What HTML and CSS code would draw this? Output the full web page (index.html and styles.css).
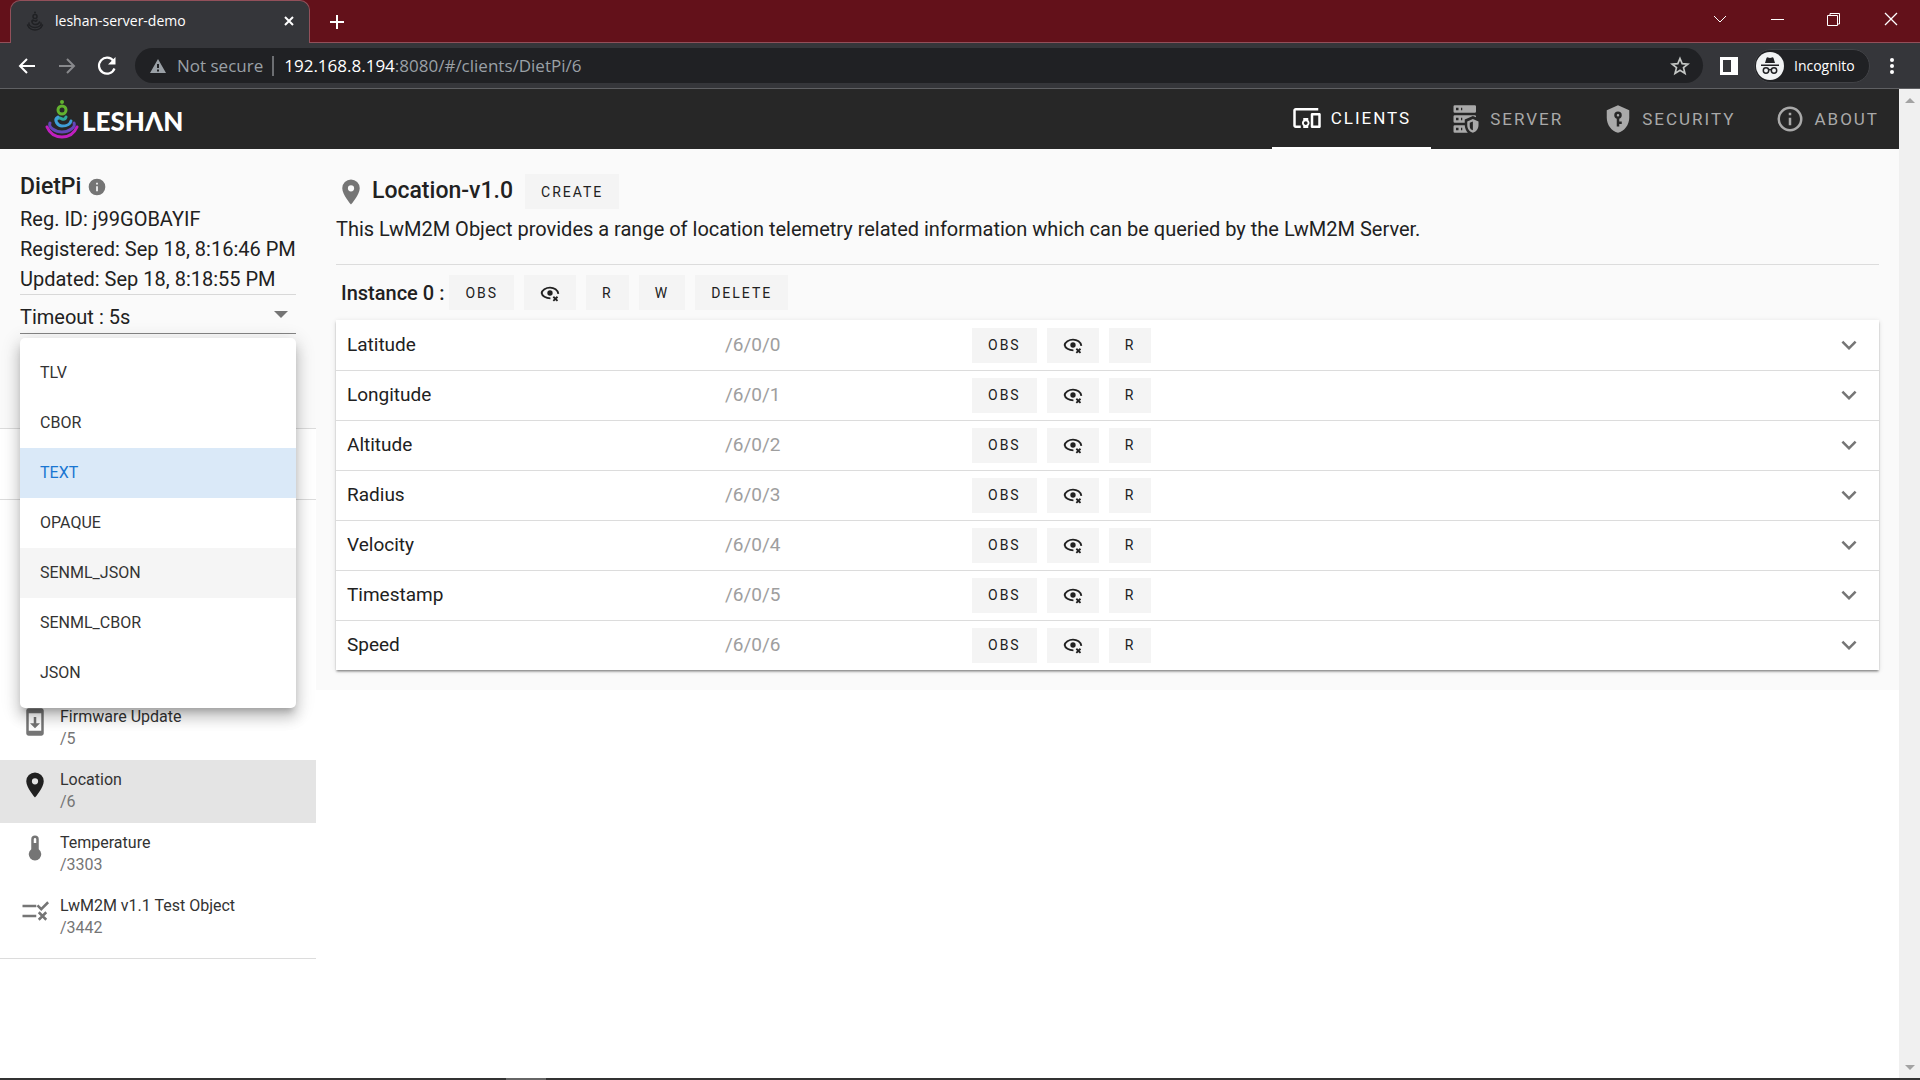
FILE: index.html
```html
<!DOCTYPE html>
<html lang="en">
<head>
<meta charset="utf-8">
<title>leshan-server-demo</title>
<link rel="stylesheet" href="styles.css">
</head>
<body>
<svg class="defs" aria-hidden="true">
  <symbol id="i-pin" viewBox="0 0 24 24"><path d="M12,11.5A2.5,2.5 0 0,1 9.5,9A2.5,2.5 0 0,1 12,6.5A2.5,2.5 0 0,1 14.5,9A2.5,2.5 0 0,1 12,11.5M12,2A7,7 0 0,0 5,9C5,14.25 12,22 12,22C12,22 19,14.25 19,9A7,7 0 0,0 12,2Z"/></symbol>
  <symbol id="i-eye" viewBox="0 0 24 24"><circle cx="12" cy="12" r="3.2"/><path d="M22 13C21.5 8.500 17 5.500 12 5.500C7 5.500 2.500 8.500 2 12C2.500 15.500 7 18.500 12.500 18.500M16 16.500L21 21.500M21 16.500L16 21.500" fill="none" stroke="currentColor" stroke-width="2.200"/></symbol>
  <symbol id="i-down" viewBox="0 0 24 24"><path d="M7.410,8.580L12,13.170L16.590,8.580L18,10L12,16L6,10L7.410,8.580Z"/></symbol>
  <symbol id="i-monk" viewBox="0 0 34 40"><g fill="none" stroke-width="3" stroke-linecap="round"><circle class="m1" cx="17" cy="11" r="4"/><path class="m2" d="M12 20Q14 18 17 20Q20 21 21 18"/><path class="m3" d="M13 18C8 21 13 27 17 27C21 27 25 26 26 22"/><path class="m4" d="M5 24C3 28 10 33 17 33C24 33 31 28 29 24"/><path class="m5" d="M2 28C5 35 10 38 17 38C24 38 29 35 32 28"/></g><circle class="m0" cx="17" cy="3" r="2"/></symbol>
</svg>

<header class="browser">
  <div class="tabstrip">
    <div class="tab">
      <svg class="favicon" viewBox="0 0 34 40"><use href="#i-monk"/></svg>
      <span class="tab-title">leshan-server-demo</span>
      <button class="plain" aria-label="Close tab"><svg class="s10" viewBox="0 0 10 10"><path d="M1 1L9 9M9 1L1 9" fill="none" stroke="currentColor" stroke-width="2"/></svg></button>
    </div>
    <button class="plain new-tab" aria-label="New tab"><svg class="s16" viewBox="0 0 16 16"><path d="M8 1V15M1 8H15" fill="none" stroke="currentColor" stroke-width="2"/></svg></button>
    <div class="window-controls">
      <button class="plain" aria-label="Tab search"><svg class="s14" viewBox="0 0 14 14"><path d="M1 4L7 10L13 4" fill="none" stroke="currentColor"/></svg></button>
      <button class="plain" aria-label="Minimize"><svg class="s14" viewBox="0 0 14 14"><path d="M1 7.500H14" fill="none" stroke="currentColor"/></svg></button>
      <button class="plain" aria-label="Restore"><svg class="s14" viewBox="0 0 14 14"><path d="M.5 3.500H10.500V13.500H.5ZM3 3V1.500H12.500V12H11" fill="none" stroke="currentColor"/></svg></button>
      <button class="plain" aria-label="Close"><svg class="s14" viewBox="0 0 14 14"><path d="M1 1L13 13M13 1L1 13" fill="none" stroke="currentColor" stroke-width="1.300"/></svg></button>
    </div>
  </div>
  <div class="toolbar">
    <div class="history">
      <button class="plain" aria-label="Back"><svg class="s20" viewBox="0 0 20 20"><path d="M18 10H3M10 3L3 10L10 17" fill="none" stroke="currentColor" stroke-width="2"/></svg></button>
      <button class="plain faded" aria-label="Forward"><svg class="s20" viewBox="0 0 20 20"><path d="M2 10H17M10 3L17 10L10 17" fill="none" stroke="currentColor" stroke-width="2"/></svg></button>
      <button class="plain" aria-label="Reload"><svg class="s20" viewBox="0 0 20 20"><path d="M16.500 5A8 8 0 1 0 17.500 12.500" fill="none" stroke="currentColor" stroke-width="2.200"/><path d="M18.500 1V8.500H11Z"/></svg></button>
    </div>
    <div class="omnibox">
      <svg class="s16 warn" viewBox="0 0 16 16"><path fill-rule="evenodd" d="M8 1L16 15H0ZM7 6V10H9V6ZM7 11.500V13.500H9V11.500Z"/></svg>
      <span class="insecure">Not secure</span>
      <span class="url"><b>192.168.8.194</b>:8080/#/clients/DietPi/6</span>
      <button class="plain star" aria-label="Bookmark"><svg class="s20" viewBox="0 0 24 24"><path d="M12 3L14.600 9.200L21.500 9.700L16.200 14L18 21L12 17.200L6 21L7.800 14L2.500 9.700L9.400 9.200Z" fill="none" stroke="currentColor" stroke-width="2"/></svg></button>
    </div>
    <button class="plain panel" aria-label="Side panel"><svg class="s18" viewBox="0 0 18 18"><path fill-rule="evenodd" d="M0 0H18V18H0ZM3 3V15H11V3Z"/></svg></button>
    <div class="incognito">
      <svg class="s28" viewBox="0 0 28 28"><circle cx="14" cy="14" r="14" fill="#f1f3f4"/><g fill="#202124"><path d="M9 11L10.500 6Q11 5 12 5.500L14 6L16 5.500Q17 5 17.500 6L19 11ZM5 12.500H23V14H5Z"/><g fill="none" stroke="#202124" stroke-width="1.500"><circle cx="10" cy="18.500" r="2.700"/><circle cx="18" cy="18.500" r="2.700"/><path d="M12.700 18Q14 17 15.300 18"/></g></g></svg>
      <span>Incognito</span>
    </div>
    <button class="plain dots" aria-label="Menu"><svg class="s18" viewBox="0 0 18 18"><circle cx="9" cy="3" r="2"/><circle cx="9" cy="9" r="2"/><circle cx="9" cy="15" r="2"/></svg></button>
  </div>
</header>

<div class="viewport">
  <div class="app">
    <header class="appbar">
      <a class="logo" href="#"><svg class="monk" viewBox="0 0 34 40"><use href="#i-monk"/></svg><span>LESHΛN</span></a>
      <nav class="nav">
        <a class="nav-link active" href="#clients"><svg class="s30" viewBox="0 0 24 24"><path d="M3 6H21V4H3C1.900 4 1 4.900 1 6V18C1 19.100 1.900 20 3 20H7V18H3V6M13 12H9V13.780C8.390 14.330 8 15.110 8 16C8 16.890 8.390 17.670 9 18.220V20H13V18.220C13.610 17.670 14 16.880 14 16S13.610 14.330 13 13.780V12M11 17.500C10.170 17.500 9.500 16.830 9.500 16S10.170 14.500 11 14.500 12.500 15.170 12.500 16 11.830 17.500 11 17.500M22 8H16C15.500 8 15 8.500 15 9V19C15 19.500 15.500 20 16 20H22C22.500 20 23 19.500 23 19V9C23 8.500 22.500 8 22 8M21 18H17V10H21V18Z"/></svg>CLIENTS</a>
        <a class="nav-link" href="#server"><svg class="s30" viewBox="0 0 24 24"><path d="M3,1H19A1,1 0 0,1 20,2V6A1,1 0 0,1 19,7H3A1,1 0 0,1 2,6V2A1,1 0 0,1 3,1M3,9H19A1,1 0 0,1 20,10V10.670L17.500,9.560L11,12.440V15H3A1,1 0 0,1 2,14V10A1,1 0 0,1 3,9M3,17H11C11.060,19.250 12,21.400 13.460,23H3A1,1 0 0,1 2,22V18A1,1 0 0,1 3,17M8,5H9V3H8V5M8,13H9V11H8V13M8,21H9V19H8V21M4,3V5H6V3H4M4,11V13H6V11H4M4,19V21H6V19H4M17.500,12L22,14V17C22,19.780 20.080,22.370 17.500,23C14.920,22.370 13,19.780 13,17V14L17.500,12M17.500,13.940L15,15.060V17.720C15,19.260 16.070,20.700 17.500,21.060V13.940Z"/></svg>SERVER</a>
        <a class="nav-link" href="#security"><svg class="s30" viewBox="0 0 24 24"><path d="M12,1L3,5V11C3,16.550 6.840,21.740 12,23C17.160,21.740 21,16.550 21,11V5L12,1M12,6A3,3 0 0,1 15,9C15,10.310 14.170,11.420 13,11.830V14H15V16H13V18H11V11.830C9.830,11.420 9,10.310 9,9A3,3 0 0,1 12,6M12,8A1,1 0 0,0 11,9A1,1 0 0,0 12,10A1,1 0 0,0 13,9A1,1 0 0,0 12,8Z"/></svg>SECURITY</a>
        <a class="nav-link" href="#about"><svg class="s30" viewBox="0 0 24 24"><path d="M11,9H13V7H11M12,20C7.590,20 4,16.410 4,12C4,7.590 7.590,4 12,4C16.410,4 20,7.590 20,12C20,16.410 16.410,20 12,20M12,2A10,10 0 0,0 2,12A10,10 0 0,0 12,22A10,10 0 0,0 22,12A10,10 0 0,0 12,2M11,17H13V11H11V17Z"/></svg>ABOUT</a>
      </nav>
    </header>

    <div class="content">
      <aside class="sidebar">
        <section class="client">
          <h2 class="client-name">DietPi <svg class="s20 grey" viewBox="0 0 24 24"><path d="M13,9H11V7H13M13,17H11V11H13M12,2A10,10 0 0,0 2,12A10,10 0 0,0 12,22A10,10 0 0,0 22,12A10,10 0 0,0 12,2Z"/></svg></h2>
          <p>Reg. ID: j99GOBAYIF</p>
          <p>Registered: Sep 18, 8:16:46 PM</p>
          <p>Updated: Sep 18, 8:18:55 PM</p>
          <div class="timeout">
            <label for="timeout">Timeout :</label>
            <select id="timeout"><option>5s</option></select>
            <svg class="caret" viewBox="0 0 14 7"><path d="M0 0H14L7 7Z"/></svg>
          </div>
          <div class="menu" role="listbox" aria-label="Content format">
            <button role="option">TLV</button>
            <button role="option">CBOR</button>
            <button role="option" class="selected" aria-selected="true">TEXT</button>
            <button role="option">OPAQUE</button>
            <button role="option" class="hovered">SENML_JSON</button>
            <button role="option">SENML_CBOR</button>
            <button role="option">JSON</button>
          </div>
        </section>
        <div class="filter"></div>
        <nav class="objects">
          <a class="object" href="#5"><svg class="s30" viewBox="0 0 24 24"><path d="M17,1.010L7,1C5.890,1 5,1.890 5,3V21C5,22.110 5.890,23 7,23H17C18.110,23 19,22.110 19,21V3C19,1.890 18.110,1.010 17,1.010M17,19H7V5H17V19M16,13H13V8H11V13H8L12,17L16,13Z"/></svg><span>Firmware Update<small>/5</small></span></a>
          <a class="object current" href="#6"><svg class="s30" viewBox="0 0 24 24"><use href="#i-pin"/></svg><span>Location<small>/6</small></span></a>
          <a class="object" href="#3303"><svg class="s30" viewBox="0 0 24 24"><path d="M15 13V5A3 3 0 0 0 9 5V13A5 5 0 1 0 15 13M12 4A1 1 0 0 1 13 5V8H11V5A1 1 0 0 1 12 4Z"/></svg><span>Temperature<small>/3303</small></span></a>
          <a class="object" href="#3442"><svg class="s30" viewBox="0 0 24 24"><path d="M2 8H13M2 16H13M14 7.500L17 10.500L22.500 5M15 13L21 19M21 13L15 19" fill="none" stroke="currentColor" stroke-width="2"/></svg><span>LwM2M v1.1 Test Object<small>/3442</small></span></a>
        </nav>
      </aside>

      <main class="main">
        <div class="title-row">
          <svg class="s30 grey" viewBox="0 0 24 24"><use href="#i-pin"/></svg>
          <h1>Location-v1.0</h1>
          <button class="btn">CREATE</button>
        </div>
        <p class="description">This LwM2M Object provides a range of location telemetry related information which can be queried by the LwM2M Server.</p>
        <div class="instance-row">
          <h2>Instance 0 :</h2>
          <button class="btn">OBS</button>
          <button class="btn" aria-label="Stop observing"><svg class="s20" viewBox="0 0 24 24"><use href="#i-eye"/></svg></button>
          <button class="btn">R</button>
          <button class="btn">W</button>
          <button class="btn">DELETE</button>
        </div>
        <div class="card">
          <div class="row"><span>Latitude</span><span class="path">/6/0/0</span><div class="actions"><button class="btn">OBS</button><button class="btn" aria-label="Stop observing"><svg class="s20" viewBox="0 0 24 24"><use href="#i-eye"/></svg></button><button class="btn">R</button></div><button class="plain grey expand" aria-label="Expand"><svg class="s30" viewBox="0 0 24 24"><use href="#i-down"/></svg></button></div>
          <div class="row"><span>Longitude</span><span class="path">/6/0/1</span><div class="actions"><button class="btn">OBS</button><button class="btn" aria-label="Stop observing"><svg class="s20" viewBox="0 0 24 24"><use href="#i-eye"/></svg></button><button class="btn">R</button></div><button class="plain grey expand" aria-label="Expand"><svg class="s30" viewBox="0 0 24 24"><use href="#i-down"/></svg></button></div>
          <div class="row"><span>Altitude</span><span class="path">/6/0/2</span><div class="actions"><button class="btn">OBS</button><button class="btn" aria-label="Stop observing"><svg class="s20" viewBox="0 0 24 24"><use href="#i-eye"/></svg></button><button class="btn">R</button></div><button class="plain grey expand" aria-label="Expand"><svg class="s30" viewBox="0 0 24 24"><use href="#i-down"/></svg></button></div>
          <div class="row"><span>Radius</span><span class="path">/6/0/3</span><div class="actions"><button class="btn">OBS</button><button class="btn" aria-label="Stop observing"><svg class="s20" viewBox="0 0 24 24"><use href="#i-eye"/></svg></button><button class="btn">R</button></div><button class="plain grey expand" aria-label="Expand"><svg class="s30" viewBox="0 0 24 24"><use href="#i-down"/></svg></button></div>
          <div class="row"><span>Velocity</span><span class="path">/6/0/4</span><div class="actions"><button class="btn">OBS</button><button class="btn" aria-label="Stop observing"><svg class="s20" viewBox="0 0 24 24"><use href="#i-eye"/></svg></button><button class="btn">R</button></div><button class="plain grey expand" aria-label="Expand"><svg class="s30" viewBox="0 0 24 24"><use href="#i-down"/></svg></button></div>
          <div class="row"><span>Timestamp</span><span class="path">/6/0/5</span><div class="actions"><button class="btn">OBS</button><button class="btn" aria-label="Stop observing"><svg class="s20" viewBox="0 0 24 24"><use href="#i-eye"/></svg></button><button class="btn">R</button></div><button class="plain grey expand" aria-label="Expand"><svg class="s30" viewBox="0 0 24 24"><use href="#i-down"/></svg></button></div>
          <div class="row"><span>Speed</span><span class="path">/6/0/6</span><div class="actions"><button class="btn">OBS</button><button class="btn" aria-label="Stop observing"><svg class="s20" viewBox="0 0 24 24"><use href="#i-eye"/></svg></button><button class="btn">R</button></div><button class="plain grey expand" aria-label="Expand"><svg class="s30" viewBox="0 0 24 24"><use href="#i-down"/></svg></button></div>
        </div>
      </main>
    </div>
  </div>
  <div class="scrollbar" aria-hidden="true">
    <svg viewBox="0 0 10 5"><path d="M5 0L10 5H0Z"/></svg>
    <svg viewBox="0 0 10 5"><path d="M0 0H10L5 5Z"/></svg>
  </div>
</div>
<footer class="taskbar"><span></span></footer>
</body>
</html>
```
FILE: styles.css
```css
* { box-sizing: border-box; }

body {
  margin: 0;
  min-height: 100vh;
  display: flex;
  flex-direction: column;
  background: #fff;
  color: #212121;
  font: 20px/30px Roboto, sans-serif;
}

h1, h2, p { margin: 0; }
svg { display: block; flex: none; fill: currentColor; }
.defs { display: none; }
.s10 { width: 10px; height: 10px; }
.s14 { width: 14px; height: 14px; }
.s16 { width: 16px; height: 16px; }
.s18 { width: 18px; height: 18px; }
.s20 { width: 20px; height: 20px; }
.s28 { width: 28px; height: 28px; }
.s30 { width: 30px; height: 30px; }
.grey { color: #757575; }

.plain {
  display: flex;
  align-items: center;
  justify-content: center;
  padding: 0;
  border: 0;
  background: none;
  color: inherit;
}
.plain.grey { color: #757575; }

/* Browser frame */
.browser { color: #fff; font: 16px/20px "Open Sans", sans-serif; }
.tabstrip {
  display: flex;
  align-items: stretch;
  height: 43px;
  padding-left: 10px;
  background: #63111a;
  box-shadow: inset 0 -1px #92505a;
}
.tab {
  display: flex;
  align-items: center;
  width: 300px;
  padding: 0 15px 2px;
  border: 1px solid #92505a;
  border-bottom: 0;
  border-radius: 10px 10px 0 0;
  background: #35363a;
  font-size: 14px;
}
.favicon { width: 18px; height: 20px; color: #202124; }
.tab-title { flex: 1; margin-left: 11px; }
.new-tab { width: 54px; }
.window-controls { display: flex; margin-left: auto; padding: 0 1px 6px 0; }
.window-controls button { width: 57px; }
.toolbar {
  display: flex;
  align-items: center;
  height: 46px;
  padding-right: 7px;
  background: #35363a;
  border-bottom: 1px solid #5f6063;
}
.history { display: flex; width: 135px; padding-left: 7px; }
.history button { width: 40px; }
.faded { color: #88898c; }
.omnibox {
  flex: 1;
  display: flex;
  align-items: center;
  height: 35px;
  padding: 0 13px 0 15px;
  border-radius: 18px;
  background: #202124;
  color: #9aa0a6;
  font-size: 17px;
}
.insecure { margin-left: 11px; padding-right: 9px; border-right: 2px solid #6c6e72; }
.url { margin-left: 10px; }
.url b { color: #fff; font-weight: 400; }
.star { margin-left: auto; color: #c4c7c5; }
.panel { width: 51px; }
.incognito {
  display: flex;
  align-items: center;
  gap: 10px;
  width: 116px;
  height: 34px;
  padding-left: 1px;
  border: 1px solid #414246;
  border-radius: 17px;
  background: #202124;
  font-size: 14px;
}
.dots { flex: none; width: 43px; }

/* Page area */
.viewport { flex: 1; display: flex; }
.app { flex: 1; min-width: 0; }
.scrollbar {
  display: flex;
  flex-direction: column;
  justify-content: space-between;
  align-items: center;
  width: 21px;
  padding: 9px 0 8px;
  background: #f0f0f0;
  color: #a3a3a3;
}
.scrollbar svg { width: 10px; height: 5px; }
.taskbar { height: 2px; padding-left: 506px; background: #333; }
.taskbar span { display: block; width: 40px; height: 2px; background: #666; }

.appbar {
  display: flex;
  justify-content: space-between;
  height: 60px;
  padding-left: 45px;
  background: #272727;
}
.logo {
  display: flex;
  align-items: center;
  gap: 3px;
  color: #fff;
  font: 900 26px/30px Lato, sans-serif;
  text-decoration: none;
}
.logo span { padding-top: 4px; }
.monk { width: 34px; height: 40px; }
.nav { display: flex; }
.nav-link {
  display: flex;
  align-items: center;
  gap: 9px;
  padding: 0 20px;
  color: #a9a9a9;
  font-size: 17px;
  letter-spacing: 2px;
  text-decoration: none;
}
.nav-link.active { color: #fff; border-bottom: 2px solid #fff; }

.content { display: flex; align-items: flex-start; }

/* Sidebar */
.sidebar { width: 316px; flex: none; }
.client {
  position: relative;
  height: 279px;
  padding: 20px 20px 0;
  background: #fafafa;
}
.client-name {
  display: flex;
  align-items: center;
  gap: 6px;
  height: 35px;
  font-size: 23px;
  font-weight: 500;
}
.client p { white-space: nowrap; }
.timeout {
  display: flex;
  align-items: center;
  height: 40px;
  border-top: 1px solid #d8d8d8;
  border-bottom: 1px solid #858585;
}
.timeout label { padding-top: 5px; }
.timeout select {
  flex: 1;
  appearance: none;
  padding: 5px 0 0 5px;
  border: 0;
  background: none;
  color: inherit;
  font: inherit;
}
.caret { width: 14px; height: 7px; margin-right: 8px; color: #757575; }
.menu {
  position: absolute;
  top: 189px;
  left: 20px;
  right: 20px;
  z-index: 2;
  padding: 10px 0;
  border-radius: 5px;
  background: #fff;
  box-shadow: 0 6px 6px -3px rgba(0,0,0,.2), 0 10px 13px 1px rgba(0,0,0,.14), 0 4px 18px 3px rgba(0,0,0,.12);
}
.menu button {
  display: block;
  width: 100%;
  height: 50px;
  padding: 0 20px;
  border: 0;
  background: none;
  color: #333;
  font: 16px/20px Roboto, sans-serif;
  text-align: left;
}
.menu .selected { background: #dae9f8; color: #1976d2; }
.menu .hovered { background: #f5f5f5; }
.filter { height: 72px; border: 1px solid #dcdcdc; border-width: 1px 0; }
.objects { padding: 197px 0 9px; border-bottom: 1px solid #dcdcdc; }
.object {
  display: flex;
  gap: 10px;
  height: 63px;
  padding: 10px 20px;
  color: #757575;
  font-size: 16px;
  line-height: 20px;
  text-decoration: none;
}
.object span { color: #333; }
.object small { display: block; margin-top: 2px; color: #757575; font-size: 16px; }
.object.current { background: #e4e4e4; color: #212121; }

/* Object details */
.main { flex: 1; min-width: 0; padding: 20px; background: #fafafa; }
.title-row { display: flex; align-items: center; height: 45px; gap: 6px; }
h1 { margin-right: 6px; padding-bottom: 2px; font-size: 23px; font-weight: 500; }
.description { height: 51px; border-bottom: 1px solid #dcdcdc; }
.instance-row { display: flex; align-items: center; gap: 10px; height: 55px; padding-left: 5px; }
.instance-row h2 { margin-right: -5px; font-size: 20px; font-weight: 500; }
.btn {
  display: flex;
  align-items: center;
  height: 35px;
  padding: 0 16px;
  border: 0;
  background: #f4f4f4;
  color: #212121;
  font: 14px/20px Roboto, sans-serif;
  letter-spacing: 2px;
}
.card {
  background: #fff;
  box-shadow: 0 2px 2px -1px rgba(0,0,0,.35), 0 2px 2px rgba(0,0,0,.14), 0 1px 5px rgba(0,0,0,.12);
}
.row {
  display: grid;
  grid-template-columns: 378fr 247fr 862fr 30px;
  align-items: center;
  height: 50px;
  padding: 0 15px 0 11px;
  font-size: 19px;
}
.row + .row { box-shadow: inset 0 1px #dcdcdc; }
.path { color: #9e9e9e; }
.actions { display: flex; gap: 10px; }

/* Logo colours */
.monk { --head: #62b22f; --neck: #2fa79b; --arms: #3f9fd8; --legs: #6247b8; --base: #c01fc0; }
.m0 { fill: var(--head, currentColor); }
.m1 { stroke: var(--head, currentColor); }
.m2 { stroke: var(--neck, currentColor); }
.m3 { stroke: var(--arms, currentColor); }
.m4 { stroke: var(--legs, currentColor); }
.m5 { stroke: var(--base, currentColor); }
```
